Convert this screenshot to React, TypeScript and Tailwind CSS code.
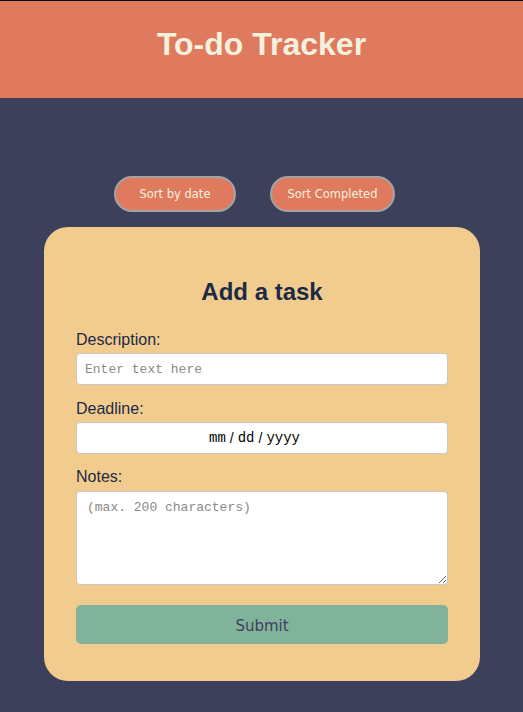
import React from "react";

export default function App() {
  return (
    <div className="min-h-[712px] bg-[#3d405b] flex flex-col">
      <header className="border-t border-black bg-[#e07a5f] h-[98px] flex items-center justify-center pb-[12px]">
        <h1 className="text-[32px] font-bold text-[#f4f1de] [font-family:Arial,'Liberation_Sans',sans-serif]">
          To-do Tracker
        </h1>
      </header>
      <div className="flex gap-[34px] mt-[78px] ml-[114px]">
        <button className="w-[122px] h-[36px] rounded-full bg-[#e07a5f] border-2 border-[#a3a3a3] text-[#f4f1de] text-[11.5px] pt-[2px] [font-family:'DejaVu_Sans',sans-serif]">
          Sort by date
        </button>
        <button className="w-[125px] h-[36px] rounded-full bg-[#e07a5f] border-2 border-[#a3a3a3] text-[#f4f1de] text-[11.5px] pt-[2px] [font-family:'DejaVu_Sans',sans-serif]">
          Sort Completed
        </button>
      </div>
      <div className="mx-[44px] mt-[15px] w-[436px] h-[454px] bg-[#f2cc8f] rounded-[24px] px-[32px] pt-[50px] [font-family:Arial,'Liberation_Sans',sans-serif] text-[#1b2a45]">
        <h2 className="text-center text-[24px] font-bold leading-[30px]">Add a task</h2>
        <div className="mt-[24px] text-[16px] leading-[18px]">Description:</div>
        <input
          type="text"
          placeholder="Enter text here"
          className="mt-[4px] block w-[372px] h-[32px] bg-white rounded-[4px] border border-[#c8c8c8] px-[8px] text-[13px] [font-family:'Liberation_Mono',monospace] placeholder:text-[#8a8a8a] outline-none"
        />
        <div className="mt-[15px] text-[16px] leading-[18px]">Deadline:</div>
        <div className="mt-[4px] w-[372px] h-[32px] bg-white rounded-[4px] border border-[#c8c8c8] flex items-center justify-center gap-[4px] pr-[15px] text-[14px] text-black [font-family:'Liberation_Mono',monospace]">
          <span>mm</span>
          <span className="[font-family:Arial,'Liberation_Sans',sans-serif] text-[14px]">/</span>
          <span>dd</span>
          <span className="[font-family:Arial,'Liberation_Sans',sans-serif] text-[14px]">/</span>
          <span>yyyy</span>
        </div>
        <div className="mt-[14px] text-[16px] leading-[18px]">Notes:</div>
        <textarea
          placeholder="(max. 200 characters)"
          className="mt-[5px] block w-[372px] h-[94px] bg-white rounded-[4px] border border-[#c8c8c8] px-[10px] py-[6px] text-[13px] [font-family:'Liberation_Mono',monospace] placeholder:text-[#8a8a8a] outline-none"
        />
        <button className="mt-[20px] w-[372px] h-[39px] rounded-[5px] bg-[#81b29a] text-[#3d405b] text-[15px] pt-[3px] [font-family:'DejaVu_Sans',sans-serif]">
          Submit
        </button>
      </div>
    </div>
  );
}
